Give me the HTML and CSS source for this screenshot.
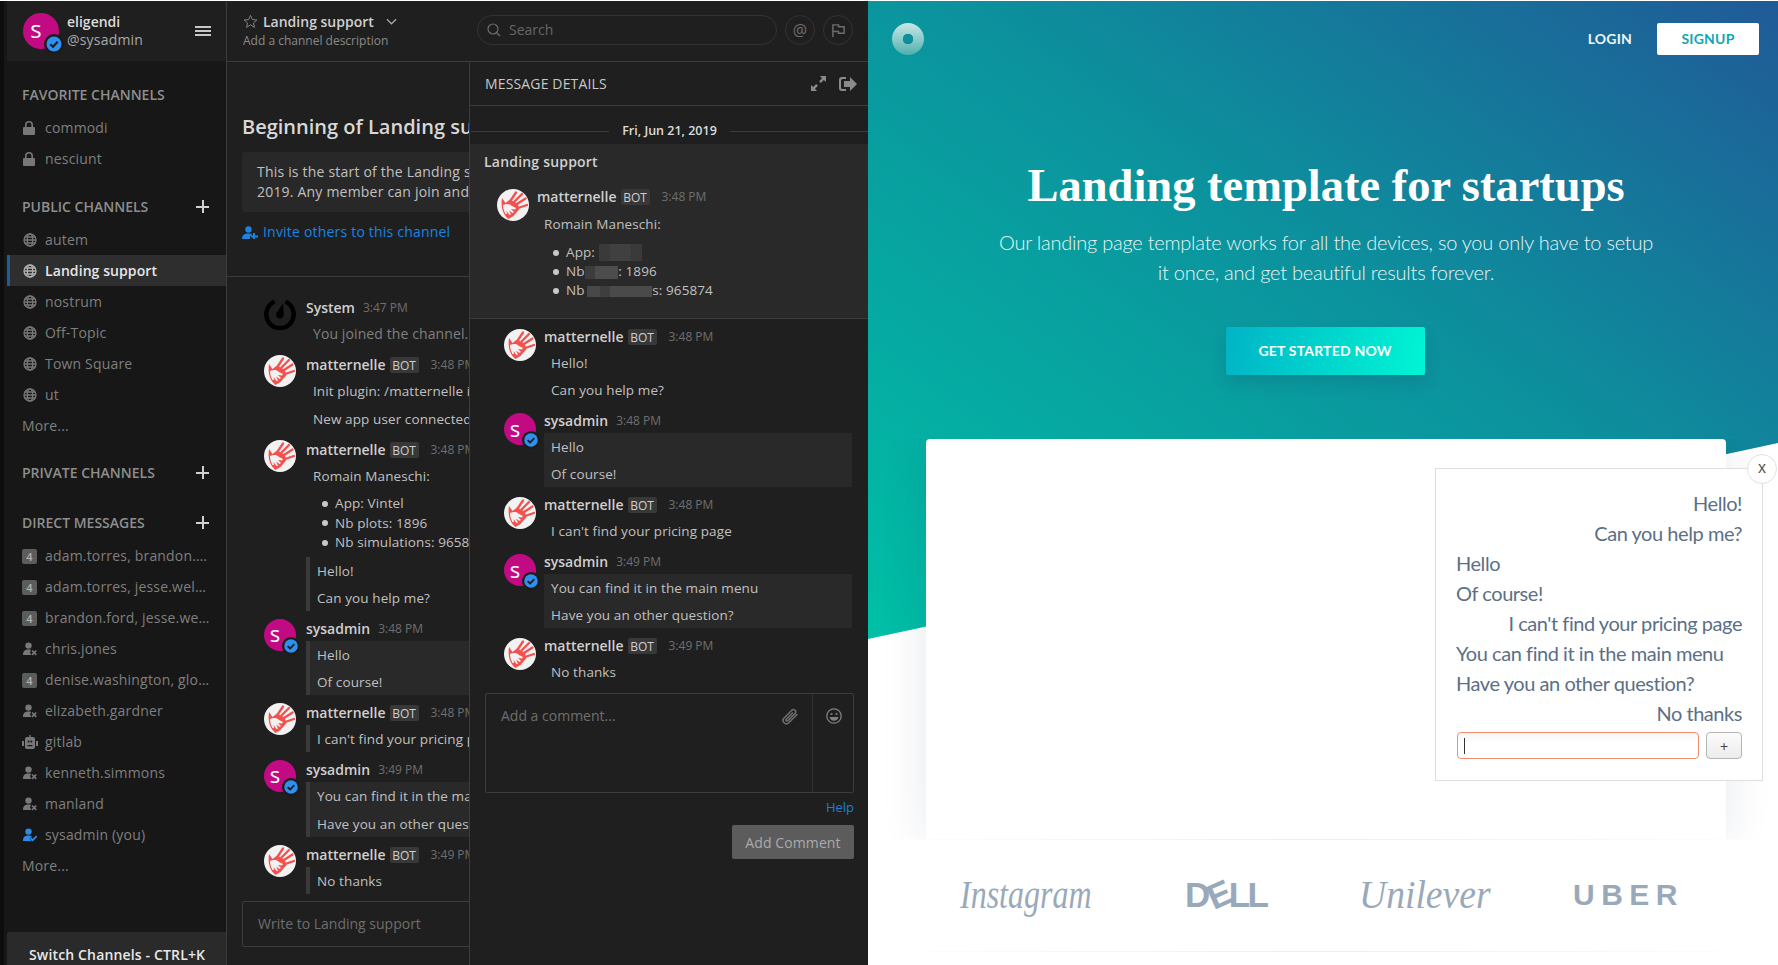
FILE: index.html
```html
<!DOCTYPE html>
<html lang="en">
<head>
<meta charset="utf-8">
<title>Landing support</title>
<link rel="stylesheet" href="styles.css">
</head>
<body>
<svg class="defs" aria-hidden="true">
  <symbol id="i-lock" viewBox="0 0 12 14"><path fill="currentColor" fill-rule="evenodd" d="M2 6V4a4 4 0 0 1 8 0v2h1a1 1 0 0 1 1 1v6a1 1 0 0 1-1 1H1a1 1 0 0 1-1-1V7a1 1 0 0 1 1-1zm1.6 0h4.8V4a2.4 2.4 0 0 0-4.8 0z"/></symbol>
  <symbol id="i-globe" viewBox="0 0 14 14"><g fill="none" stroke="currentColor" stroke-width="1.3"><circle cx="7" cy="7" r="6"/><ellipse cx="7" cy="7" rx="2.7" ry="6"/><path d="M1 7h12M1.8 4h10.4M1.8 10h10.4"/></g></symbol>
  <symbol id="i-away" viewBox="0 0 14 14"><g fill="currentColor"><circle cx="5.5" cy="3.6" r="3.2"/><path d="M0 13c0-4 1.800-5.500 5.500-5.500 1 0 1.900.1 2.600.4L7 10l1.300 3z"/></g><path d="M9 8.500l4.300 4.300M13.300 8.500L9 12.800" stroke="currentColor" stroke-width="1.700" fill="none"/></symbol>
  <symbol id="i-online" viewBox="0 0 14 14"><g fill="#2a8bea"><circle cx="5.500" cy="3.600" r="3.200"/><path d="M0 13c0-4 1.800-5.500 5.500-5.500 1.500 0 2.600.2 3.400.8L6.500 10.500 8.500 13z"/></g><path d="M7.300 9.800l2.400 2.400 4-4.200" stroke="#2a8bea" stroke-width="1.700" fill="none"/></symbol>
  <symbol id="i-bot" viewBox="0 0 16 14"><path fill="currentColor" fill-rule="evenodd" d="M7.300 0h1.400v2H11a2 2 0 0 1 2 2v8a2 2 0 0 1-2 2H5a2 2 0 0 1-2-2V4a2 2 0 0 1 2-2h2.300zM5.800 5.500v2h1.600v-2zm2.800 0v2h1.600v-2zM5.500 10v1.300h5V10zM0 6h2v5H0zm14 0h2v5h-2z"/></symbol>
  <symbol id="i-check" viewBox="0 0 20 20"><circle cx="10" cy="10" r="10" fill="#1b1b1b"/><circle cx="10" cy="10" r="7.500" fill="#2e90ef"/><path d="M6.300 10.200l2.700 2.600 4.700-5" fill="none" stroke="#1b1b1b" stroke-width="2"/></symbol>
  <symbol id="i-hand" viewBox="0 0 32 32"><circle cx="16" cy="16" r="16" fill="#f2f2f2"/><g fill="none" stroke="#f4504e" stroke-width="2.300" stroke-linecap="round"><path d="M14 11L19 3.500"/><path d="M17.500 12.500L25 5"/><path d="M20 15L28.500 9.500"/><path d="M21 19L30 16"/></g><path fill="#f4504e" d="M5 9L8.500 14 13 10.500 20.500 14.500 22.500 20 16.500 27 11.500 30C6.500 26 3.500 19 5 9z"/><path fill="#f2f2f2" d="M6 16C9 15 12 14 15 17L19 19 18 20.500 14 20 17 23 15.500 24 12 21.500 14 25.500 12.500 26 9.500 22 10 25 8.500 25C7 22 6 19 6 16z"/></symbol>
  <symbol id="i-system" viewBox="0 0 32 32"><path fill="none" stroke="#000" stroke-width="4.500" d="M21.500 3.800a13.700 13.700 0 1 1-11 0"/><path fill="#000" d="M19 5.500l.8 11a3.900 3.900 0 1 1-7.600-1z"/></symbol>
</svg>

<div class="app">
  <div class="edge"></div>

  <aside class="sidebar">
    <header class="side-head">
      <span class="avatar avatar-lg">s<svg class="status status-lg"><use href="#i-check"/></svg></span>
      <div class="who"><div class="who-name">eligendi</div><div class="who-handle">@sysadmin</div></div>
      <span class="burger"><i></i><i></i><i></i></span>
    </header>

    <nav class="side-nav">
      <section class="side-sec">
        <h4 class="side-title">FAVORITE CHANNELS</h4>
        <a class="row"><svg class="ic ic-lock"><use href="#i-lock"/></svg>commodi</a>
        <a class="row"><svg class="ic ic-lock"><use href="#i-lock"/></svg>nesciunt</a>
      </section>
      <section class="side-sec side-sec-public">
        <h4 class="side-title">PUBLIC CHANNELS<b class="plus"></b></h4>
        <a class="row"><svg class="ic"><use href="#i-globe"/></svg>autem</a>
        <a class="row row-active"><svg class="ic"><use href="#i-globe"/></svg>Landing support</a>
        <a class="row"><svg class="ic"><use href="#i-globe"/></svg>nostrum</a>
        <a class="row"><svg class="ic"><use href="#i-globe"/></svg>Off-Topic</a>
        <a class="row"><svg class="ic"><use href="#i-globe"/></svg>Town Square</a>
        <a class="row"><svg class="ic"><use href="#i-globe"/></svg>ut</a>
        <a class="row row-more">More...</a>
      </section>
      <section class="side-sec">
        <h4 class="side-title">PRIVATE CHANNELS<b class="plus"></b></h4>
      </section>
      <section class="side-sec side-sec-dm">
        <h4 class="side-title">DIRECT MESSAGES<b class="plus"></b></h4>
        <a class="row"><span class="count">4</span>adam.torres, brandon.…</a>
        <a class="row"><span class="count">4</span>adam.torres, jesse.wel…</a>
        <a class="row"><span class="count">4</span>brandon.ford, jesse.we…</a>
        <a class="row"><svg class="ic"><use href="#i-away"/></svg>chris.jones</a>
        <a class="row"><span class="count">4</span>denise.washington, glo…</a>
        <a class="row"><svg class="ic"><use href="#i-away"/></svg>elizabeth.gardner</a>
        <a class="row"><svg class="ic ic-bot"><use href="#i-bot"/></svg>gitlab</a>
        <a class="row"><svg class="ic"><use href="#i-away"/></svg>kenneth.simmons</a>
        <a class="row"><svg class="ic"><use href="#i-away"/></svg>manland</a>
        <a class="row"><svg class="ic"><use href="#i-online"/></svg>sysadmin (you)</a>
        <a class="row row-more">More...</a>
      </section>
    </nav>
    <div class="switch">Switch Channels - CTRL+K</div>
  </aside>

  <main class="chat">
    <header class="chat-head">
      <div class="chan-title">
        <div class="chan-name">
          <svg class="star" viewBox="0 0 16 16"><path fill="none" stroke="#8a8a8a" stroke-width="1" d="M8 1.500l2 4.400 4.800.5-3.600 3.200 1 4.700L8 11.500l-4.200 2.800 1-4.700L1.200 6.400 6 5.900z"/></svg>
          <span>Landing support</span>
          <svg class="chev" viewBox="0 0 12 7"><path fill="none" stroke="#aaa" stroke-width="1.300" d="M1 1l5 5 5-5"/></svg>
        </div>
        <div class="chan-desc">Add a channel description</div>
      </div>
      <div class="search">
        <svg class="search-ic" viewBox="0 0 14 14"><path fill="none" stroke="#6e6e6e" stroke-width="1.200" d="M6 1a5 5 0 1 1 0 10A5 5 0 0 1 6 1zm3.600 8.600L13 13"/></svg>
        <span>Search</span>
      </div>
      <span class="round">@</span>
      <span class="round"><svg class="flag" viewBox="0 0 16 16"><path fill="none" stroke="#6e6e6e" stroke-width="1.500" d="M2 15V2h6v2h6v7H8V9H2"/></svg></span>
    </header>

    <div class="chat-body">
      <section class="channel">
        <div class="intro">
          <h2 class="intro-title">Beginning of Landing support</h2>
          <div class="intro-box">
            <p>This is the start of the Landing support channel, created by sysadmin on June 21,</p>
            <p>2019. Any member can join and read this channel.</p>
          </div>
          <a class="invite">
            <svg class="invite-ic" viewBox="0 0 16 13"><g fill="#1b84e2"><circle cx="6.500" cy="3.500" r="3.200"/><path d="M0 13c0-4 2.500-5.500 6.500-5.500 1.200 0 2.300.2 3.200.6V10H8v3z"/><path d="M11 7h2v2.500h3v2h-3V14h-2v-2.500H9v-2h2z"/></g></svg>Invite others to this channel</a>
        </div>

        <div class="posts">
          <article class="post post-text">
            <svg class="av"><use href="#i-system"/></svg>
            <div class="post-main">
              <div class="post-head"><span class="name">System</span><time>3:47 PM</time></div>
              <div class="msg"><p class="dim">You joined the channel.</p></div>
            </div>
          </article>
          <article class="post post-text">
            <svg class="av"><use href="#i-hand"/></svg>
            <div class="post-main">
              <div class="post-head"><span class="name">matternelle</span><span class="bot">BOT</span><time class="t-bot">3:48 PM</time></div>
              <div class="msg"><p>Init plugin: /matternelle init</p><p>New app user connected</p></div>
            </div>
          </article>
          <article class="post">
            <svg class="av"><use href="#i-hand"/></svg>
            <div class="post-main">
              <div class="post-head"><span class="name">matternelle</span><span class="bot">BOT</span><time class="t-bot">3:48 PM</time></div>
              <div class="msg">
                <p>Romain Maneschi:</p>
                <ul class="list"><li>App: Vintel</li><li>Nb plots: 1896</li><li>Nb simulations: 965874</li></ul>
              </div>
              <blockquote class="quote"><p>Hello!</p><p>Can you help me?</p></blockquote>
            </div>
          </article>
          <article class="post">
            <span class="avatar">s<svg class="status"><use href="#i-check"/></svg></span>
            <div class="post-main">
              <div class="post-head"><span class="name">sysadmin</span><time>3:48 PM</time></div>
              <blockquote class="quote quote-me"><p>Hello</p><p>Of course!</p></blockquote>
            </div>
          </article>
          <article class="post">
            <svg class="av"><use href="#i-hand"/></svg>
            <div class="post-main">
              <div class="post-head"><span class="name">matternelle</span><span class="bot">BOT</span><time class="t-bot">3:48 PM</time></div>
              <blockquote class="quote"><p>I can't find your pricing page</p></blockquote>
            </div>
          </article>
          <article class="post">
            <span class="avatar">s<svg class="status"><use href="#i-check"/></svg></span>
            <div class="post-main">
              <div class="post-head"><span class="name">sysadmin</span><time>3:49 PM</time></div>
              <blockquote class="quote quote-me quote-wide"><p>You can find it in the main menu</p><p>Have you an other question?</p></blockquote>
            </div>
          </article>
          <article class="post">
            <svg class="av"><use href="#i-hand"/></svg>
            <div class="post-main">
              <div class="post-head"><span class="name">matternelle</span><span class="bot">BOT</span><time class="t-bot">3:49 PM</time></div>
              <blockquote class="quote"><p>No thanks</p></blockquote>
            </div>
          </article>
        </div>

        <div class="composer">Write to Landing support</div>
      </section>

      <section class="thread">
        <header class="thread-head">
          <span class="thread-title">MESSAGE DETAILS</span>
          <svg class="expand" viewBox="0 0 16 16"><path fill="#8a8a8a" d="M9.500 0H16v6.500l-2.300-2.300-3.200 3.200-1.900-1.900 3.200-3.200zM6.500 16H0V9.500l2.300 2.300 3.200-3.200 1.900 1.900-3.200 3.200z"/></svg>
          <svg class="leave" viewBox="0 0 18 16"><path fill="#8a8a8a" fill-rule="evenodd" d="M3 1h4v2H3.500A1.500 1.500 0 0 0 2 4.500v7A1.500 1.500 0 0 0 3.500 13H7v2H3a3 3 0 0 1-3-3V4a3 3 0 0 1 3-3zm8 0l7 7-7 7v-4H5V5h6z"/></svg>
        </header>
        <div class="date"><span>Fri, Jun 21, 2019</span></div>
        <div class="root">
          <div class="root-chan">Landing support</div>
          <article class="post post-root">
            <svg class="av"><use href="#i-hand"/></svg>
            <div class="post-main">
              <div class="post-head"><span class="name">matternelle</span><span class="bot">BOT</span><time class="t-bot">3:48 PM</time></div>
              <div class="msg">
                <p>Romain Maneschi:</p>
                <ul class="list list-root">
                  <li>App: <i class="blur blur-a"></i></li>
                  <li>Nb <i class="blur blur-b"></i>: 1896</li>
                  <li>Nb <i class="blur blur-c"></i>s: 965874</li>
                </ul>
              </div>
            </div>
          </article>
        </div>
        <div class="replies">
          <article class="post">
            <svg class="av"><use href="#i-hand"/></svg>
            <div class="post-main">
              <div class="post-head"><span class="name">matternelle</span><span class="bot">BOT</span><time class="t-bot">3:48 PM</time></div>
              <div class="msg"><p>Hello!</p><p>Can you help me?</p></div>
            </div>
          </article>
          <article class="post">
            <span class="avatar">s<svg class="status"><use href="#i-check"/></svg></span>
            <div class="post-main">
              <div class="post-head"><span class="name">sysadmin</span><time>3:48 PM</time></div>
              <div class="bubble"><p>Hello</p><p>Of course!</p></div>
            </div>
          </article>
          <article class="post">
            <svg class="av"><use href="#i-hand"/></svg>
            <div class="post-main">
              <div class="post-head"><span class="name">matternelle</span><span class="bot">BOT</span><time class="t-bot">3:48 PM</time></div>
              <div class="msg"><p>I can't find your pricing page</p></div>
            </div>
          </article>
          <article class="post">
            <span class="avatar">s<svg class="status"><use href="#i-check"/></svg></span>
            <div class="post-main">
              <div class="post-head"><span class="name">sysadmin</span><time>3:49 PM</time></div>
              <div class="bubble"><p>You can find it in the main menu</p><p>Have you an other question?</p></div>
            </div>
          </article>
          <article class="post">
            <svg class="av"><use href="#i-hand"/></svg>
            <div class="post-main">
              <div class="post-head"><span class="name">matternelle</span><span class="bot">BOT</span><time class="t-bot">3:49 PM</time></div>
              <div class="msg"><p>No thanks</p></div>
            </div>
          </article>
        </div>
        <div class="comment">
          <div class="comment-input">
            <span>Add a comment...</span>
            <svg class="clip" viewBox="0 0 18 18"><path fill="none" stroke="#6e6e6e" stroke-width="1.600" stroke-linecap="round" d="M16 6.500l-8.200 8.200a3.300 3.300 0 0 1-4.700-4.700l8-8a2.300 2.300 0 0 1 3.200 3.200l-7.500 7.500a1 1 0 0 1-1.500-1.500L11.500 5"/></svg>
          </div>
          <div class="comment-emoji">
            <svg class="emoji" viewBox="0 0 16 16"><circle cx="8" cy="8" r="7.200" fill="none" stroke="#808080" stroke-width="1.300"/><circle cx="5.500" cy="6" r="1.100" fill="#808080"/><circle cx="10.500" cy="6" r="1.100" fill="#808080"/><path fill="#808080" d="M3.500 9h9c-.4 2.400-2.100 3.800-4.500 3.800S3.900 11.400 3.500 9z"/></svg>
          </div>
        </div>
        <a class="help">Help</a>
        <button class="add" type="button">Add Comment</button>
      </section>
    </div>
  </main>

  <div class="landing">
    <div class="hero-bg"></div>
    <header class="nav">
      <span class="logo"></span>
      <span class="nav-login">LOGIN</span>
      <span class="nav-signup">SIGNUP</span>
    </header>
    <div class="stage">
      <h1 class="hero-title">Landing template for startups</h1>
      <p class="hero-sub">Our landing page template works for all the devices, so you only have to setup<br>it once, and get beautiful results forever.</p>
      <a class="cta">GET STARTED NOW</a>
      <div class="card"></div>
    </div>
    <div class="logos">
      <span class="brand brand-ig">Instagram</span>
      <span class="brand brand-dell">D<i class="dell-e">E</i>LL</span>
      <span class="brand brand-un">Unilever</span>
      <span class="brand brand-uber">UBER</span>
    </div>

    <aside class="widget">
      <button class="widget-close" type="button">x</button>
      <p class="w-right">Hello!</p>
      <p class="w-right">Can you help me?</p>
      <p>Hello</p>
      <p>Of course!</p>
      <p class="w-right">I can't find your pricing page</p>
      <p>You can find it in the main menu</p>
      <p>Have you an other question?</p>
      <p class="w-right">No thanks</p>
      <div class="w-form">
        <span class="w-input"><i class="caret"></i></span>
        <span class="w-plus">+</span>
      </div>
    </aside>
  </div>
</div>
</body>
</html>
```

FILE: styles.css
```css
* { box-sizing: border-box; }
html, body { margin: 0; padding: 0; height: 100%; overflow: hidden; background: #fff; }
body { padding-top: 1px; font: 14px/20px "Open Sans", "Liberation Sans", sans-serif; color: #c6c6c6; }
p, h1, h2, h4, ul, blockquote { margin: 0; padding: 0; }
.defs { display: none; }

.app { display: flex; width: 1778px; height: 964px; overflow: hidden; }
.edge { width: 4px; background: #0d0d0d; flex: none; }

/* sidebar */
.sidebar { width: 223px; flex: none; display: flex; flex-direction: column; background: #171717; padding-left: 3px; border-right: 1px solid #3c3c3c; }
.side-head { height: 60px; flex: none; display: flex; align-items: center; background: #1f1f1f; padding: 0 15px 0 16px; }
.avatar { position: relative; flex: none; display: flex; align-items: center; justify-content: center; width: 32px; height: 32px; border-radius: 50%; background: #c20a83; color: #fff; font-size: 22px; line-height: 26px; padding: 0 10px 3px 0; font-weight: 400; }
.avatar-lg { width: 36px; height: 36px; font-size: 24px; padding-bottom: 4px; margin-top: -1px; }
.status { position: absolute; right: -4px; bottom: -4px; width: 18px; height: 18px; }
.status-lg { right: -5px; bottom: -5px; width: 20px; height: 20px; }
.who { margin-left: 8px; flex: 1; line-height: 18px; }
.who-name { font-weight: 600; color: #dcdcdc; }
.who-handle { color: #a8a8a8; letter-spacing: .2px; }
.burger { display: flex; flex-direction: column; gap: 2px; width: 16px; }
.burger i { height: 2px; background: #c8c8c8; }

.side-nav { flex: 1; padding-top: 18px; min-height: 0; }
.side-sec { margin-bottom: 17px; }
.side-sec-public { margin-bottom: 16px; }
.side-title { display: flex; justify-content: space-between; align-items: center; height: 33px; padding: 0 17px 2px 15px; font-size: 14px; font-weight: 600; color: #8e8e8e; }
.plus { width: 13px; height: 13px; background: linear-gradient(#d0d0d0, #d0d0d0) center / 2px 13px no-repeat, linear-gradient(#d0d0d0, #d0d0d0) center / 13px 2px no-repeat; }
.row { display: flex; align-items: center; height: 31px; padding-left: 16px; color: #7f7f7f; white-space: nowrap; letter-spacing: .18px; }
.row-active { background: #2e2e2e; border-left: 3px solid #1c5d9e; padding-left: 13px; color: #e6e6e6; font-weight: 600; letter-spacing: .08px; }
.row-more { padding-left: 15px; }
.ic { width: 14px; height: 14px; margin-right: 8px; flex: none; color: #787878; }
.row-active .ic { color: #b0b0b0; }
.ic-lock { width: 12px; margin-right: 10px; color: #777; }
.ic-bot { width: 16px; margin-right: 7px; margin-left: -1px; }
.count { width: 15px; height: 15px; margin: 2px 8px 0 -1px; flex: none; background: #5c5c5c; border-radius: 2px; color: #b4b4b4; font-size: 11px; font-weight: 600; line-height: 15px; text-align: center; letter-spacing: 0; }
.switch { height: 33px; flex: none; background: #2a2a2a; border-radius: 3px 0 0 0; padding: 13px 0 0 22px; color: #e8e8e8; font-weight: 600; white-space: nowrap; letter-spacing: .15px; }

/* chat */
.chat { width: 641px; flex: none; display: flex; flex-direction: column; background: #1f1f1f; min-width: 0; }
.chat-head { height: 61px; flex: none; display: flex; align-items: center; padding: 0 15px 2px 16px; border-bottom: 1px solid #3c3c3c; }
.chan-title { width: 234px; flex: none; margin-top: 2px; }
.chan-name { display: flex; align-items: center; height: 20px; font-weight: 600; color: #cfcfcf; }
.star { width: 15px; height: 15px; margin-right: 5px; }
.chev { width: 11px; height: 7px; margin-left: 12px; }
.chan-desc { margin-top: -1px; height: 20px; font-size: 12px; color: #8a8a8a; }
.search { display: flex; align-items: center; width: 300px; height: 30px; border: 1px solid #333; border-radius: 15px; padding-left: 9px; color: #666; flex: none; }
.search-ic { width: 14px; height: 14px; margin-right: 8px; }
.round { display: flex; align-items: center; justify-content: center; width: 30px; height: 30px; border: 1px solid #333; border-radius: 50%; margin-left: 8px; color: #6e6e6e; font-size: 16px; flex: none; }
.flag { width: 15px; height: 15px; }

.chat-body { flex: 1; display: flex; min-height: 0; }
.channel { width: 242px; flex: none; display: flex; flex-direction: column; overflow: hidden; }
.intro { height: 215px; flex: none; padding: 51px 0 0 15px; border-bottom: 1px solid #3c3c3c; white-space: nowrap; }
.intro-title { font-size: 20px; line-height: 28px; font-weight: 600; color: #d8d8d8; }
.intro-box { width: 560px; height: 60px; margin-top: 11px; padding: 10px 15px; background: #282828; border-radius: 3px; color: #c0c0c0; letter-spacing: .2px; }
.invite { display: flex; align-items: center; margin-top: 10px; color: #1b84e2; letter-spacing: .2px; }
.invite-ic { width: 16px; height: 13px; margin-right: 5px; }

.posts { flex: 1; min-height: 0; padding: 21px 0 0 37px; white-space: nowrap; }
.post { display: flex; gap: 10px; margin-bottom: 8px; }
.post-text { margin-bottom: 11px; }
.av { width: 32px; height: 32px; flex: none; }
.post-main { min-width: 0; flex: 1; }
.post-head { display: flex; align-items: center; height: 20px; }
.post-head > * { flex: none; }
.name { font-weight: 600; color: #cfcfcf; }
.bot { width: 29px; height: 16px; margin-left: 4px; background: #383838; border-radius: 2px; text-align: center; font-size: 12px; line-height: 17px; color: #cfcfcf; }
time { margin-left: 8px; font-size: 12px; color: #6f6f6f; }
.t-bot { margin-left: 12px; }
.msg { margin-top: 6px; padding-left: 7px; color: #c0c0c0; font-size: 13.5px; letter-spacing: .1px; }
.msg p + p { margin-top: 8px; }
.dim { color: #7f7f7f; font-size: 14px; letter-spacing: .1px; }
.list { margin-top: 8px; padding-left: 22px; list-style: none; }
.list li { height: 19.5px; line-height: 19.5px; }
.list li::before { content: ""; display: inline-block; width: 6px; height: 6px; margin: 0 7px 1px -13px; border-radius: 50%; background: #c8c8c8; vertical-align: middle; }
.quote { width: 340px; margin-top: 2px; padding: 4px 0 3px 7px; border-left: 4px solid #3a3a3a; color: #c0c0c0; font-size: 13.5px; letter-spacing: .1px; }
.msg + .quote { margin-top: 4px; }
.quote p + p { margin-top: 7px; }
.quote-wide p + p { margin-top: 8px; }
.quote-me { background: #292929; }

.composer { height: 46px; flex: none; width: 500px; margin: 0 0 18px 15px; padding: 12px 15px; border: 1px solid #3c3c3c; border-radius: 2px; color: #6e6e6e; white-space: nowrap; }

/* thread */
.thread { width: 399px; flex: none; display: flex; flex-direction: column; background: #1f1f1f; border-left: 1px solid #3c3c3c; }
.thread-head { height: 44px; flex: none; display: flex; align-items: center; padding: 0 11px 0 15px; border-bottom: 1px solid #3c3c3c; }
.thread-title { flex: 1; color: #c8c8c8; letter-spacing: .15px; }
.expand { width: 15px; height: 15px; margin-right: 13px; }
.leave { width: 18px; height: 16px; }
.date { display: flex; align-items: center; height: 38px; flex: none; padding: 16px 0 4px 1px; gap: 13px; font-size: 12.5px; font-weight: 600; color: #dcdcdc; justify-content: center; }
.date::before, .date::after { content: ""; flex: 1; height: 1px; background: #3c3c3c; }
.root { height: 175px; flex: none; background: #292929; border-bottom: 1px solid #3c3c3c; padding: 8px 0 0 14px; }
.root-chan { font-weight: 600; color: #d0d0d0; letter-spacing: .2px; }
.post-root { margin: 17px 0 0 13px; gap: 8px; }
.thread .post-head { margin: -2px 0 0; }
.post-root .msg { margin-top: 7px; }
.list-root { margin-top: 9px; }
.list-root li { height: 19px; line-height: 19px; }
.blur { display: inline-block; vertical-align: middle; }
.blur-a { width: 43px; height: 17px; margin-top: -1px; background: linear-gradient(90deg, #3a3a3a 0 25%, #404040 25% 75%, #3a3a3a 75%); }
.blur-b { width: 33px; height: 13px; margin-left: -3px; background: linear-gradient(90deg, #3c3c3c 0 30%, #4c4c4c 30% 100%); }
.blur-c { width: 65px; height: 11px; margin-left: -1px; background: linear-gradient(90deg, #484848 0 20%, #3e3e3e 20% 35%, #4a4a4a 35% 100%); }
.replies { flex: none; padding: 10px 0 0 34px; height: 374px; }
.replies .post { margin-bottom: 13px; gap: 8px; }
.replies .msg { margin-top: 6px; }
.replies .msg p + p { margin-top: 7px; }
.bubble { width: 308px; margin-top: 2px; padding: 4px 7px 3px; margin-bottom: -3px; background: #292929; color: #c0c0c0; font-size: 13.5px; letter-spacing: .1px; }
.bubble p + p { margin-top: 7px; }

.comment { flex: none; width: 369px; height: 100px; margin-left: 15px; display: flex; border: 1px solid #3c3c3c; border-radius: 2px; }
.comment-input { flex: 1; display: flex; justify-content: space-between; padding: 12px 13px 0 15px; color: #6e6e6e; border-right: 1px solid #333; }
.clip { width: 18px; height: 18px; margin-top: 2px; }
.comment-emoji { width: 40px; padding: 14px 0 0 13px; }
.emoji { display: block; width: 16px; height: 16px; }
.help { align-self: flex-end; margin: 4px 14px 0 0; font-size: 13px; height: 20px; color: #1b7fd8; }
.add { align-self: flex-end; width: 122px; height: 34px; margin: 8px 14px 0 0; padding: 0; border: 0; border-radius: 2px; background: #5c5c5c; color: #ababab; font: 14px "Open Sans", sans-serif; letter-spacing: .1px; }

/* landing */
.landing { position: relative; width: 910px; flex: none; overflow: hidden; background: #fff; font-family: Lato, "Open Sans", sans-serif; }
.hero-bg { position: absolute; inset: 0 0 auto 0; height: 640px; background: linear-gradient(to top right, #00c0a6, #0c919d 55%, #205a97); clip-path: polygon(0 0, 100% 0, 100% 442px, 0 638px); }
.nav { position: relative; display: flex; align-items: center; height: 54px; padding: 22px 19px 0 24px; }
.logo { width: 32px; height: 32px; border-radius: 50%; margin-right: auto; background: radial-gradient(circle at 50% 50%, #0f8f99 0 5px, transparent 5.500px), linear-gradient(#c9e7e6, #4fb0ae); }
.nav-login { font-weight: 700; color: #eef6f6; letter-spacing: .2px; margin-right: 25px; }
.nav-signup { width: 102px; height: 32px; background: #fff; border-radius: 2px; color: #0fa7b5; font-weight: 700; letter-spacing: .2px; text-align: center; line-height: 32px; }

.stage { position: relative; width: 800px; margin-left: 58px; display: flex; flex-direction: column; align-items: center; }
.hero-title { margin-top: 106px; height: 50px; font: 700 46.5px/50px "Liberation Serif", serif; color: #fff; white-space: nowrap; }
.hero-sub { margin-top: 16px; font-size: 20px; line-height: 30px; font-weight: 300; letter-spacing: -.23px; color: #e8f5f4; text-align: center; white-space: nowrap; }
.cta { width: 199px; height: 48px; margin: 40px 2px 0 0; background: linear-gradient(100deg, #00b4c6, #00f5d4); border-radius: 2px; box-shadow: 0 8px 16px rgba(22, 52, 90, .16); color: #fff; font-weight: 700; text-align: center; line-height: 48px; letter-spacing: .2px; }
.card { width: 800px; height: 400px; margin-top: 64px; background: #fff; border-radius: 4px 4px 0 0; box-shadow: 0 0 48px rgba(21, 44, 80, .10); clip-path: inset(0 -60px 0 -60px); }

.logos { position: relative; display: flex; align-items: center; gap: 94px; height: 113px; padding: 0 0 2px 92px; background: #fff; }
.logos::before, .logos::after { content: ""; position: absolute; left: 0; right: 0; height: 1px; background: linear-gradient(90deg, #fff, #eceef1 50%, #fff); }
.logos::before { top: 0; }
.logos::after { bottom: 0; }
.brand { flex: none; color: #9aa9ba; white-space: nowrap; }
.brand-ig { width: 131px; font: italic 400 40px/40px "Liberation Serif", serif; transform: scaleX(.8); transform-origin: 0 50%; }
.brand-dell { width: 80px; font: 700 35px/32px "Liberation Sans", sans-serif; letter-spacing: -2.5px; }
.dell-e { display: inline-block; font-style: normal; transform: rotate(-24deg); }
.brand-un { width: 120px; font: italic 400 40px/40px "Liberation Serif", serif; transform: scaleX(.94); transform-origin: 0 50%; }
.brand-uber { font: 700 30px/32px "Liberation Sans", sans-serif; letter-spacing: 6.500px; }

.widget { position: absolute; left: 567px; top: 467px; width: 328px; height: 313px; padding: 19px 20px 0 20px; background: #fff; border: 1px solid #dedede; color: #5c6f86; font-size: 20px; line-height: 30px; letter-spacing: -.45px; }
.w-right { text-align: right; }
.widget-close { position: absolute; right: -15px; top: -15px; width: 30px; height: 30px; padding: 0 0 2px; background: #fff; border: 1px solid #e2e2e2; border-radius: 50%; color: #555; font: 16px/26px "Liberation Sans", sans-serif; }
.w-form { display: flex; gap: 7px; margin: 4px 0 0 1px; letter-spacing: 0; }
.w-input { width: 243px; height: 27px; padding: 5px 6px; background: linear-gradient(#f6f6f6, #fff 40%); border: 1px solid #ef8f6f; border-radius: 4px; }
.caret { display: block; width: 1px; height: 16px; background: #333; }
.w-plus { width: 36px; height: 27px; background: linear-gradient(#fbfbfb, #ececec); border: 1px solid #b4b4b4; border-radius: 4px; color: #444; font-size: 14px; line-height: 25px; text-align: center; }
```
